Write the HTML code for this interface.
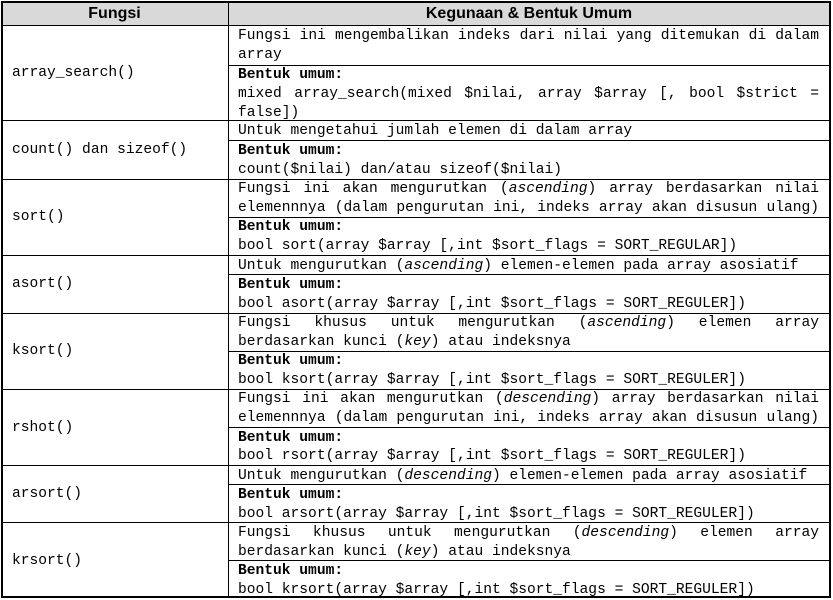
<!DOCTYPE html>
<html><head><meta charset="utf-8"><style>
body{margin:0;width:833px;height:599px;background:#fff;position:relative;overflow:hidden;font-family:"Liberation Mono",monospace;font-size:14.6px;color:#000}
.h{position:absolute;background:#000;height:1px}
.v{position:absolute;background:#000;width:1px}
.t{position:absolute;left:238px;width:581px;line-height:19px;white-space:nowrap;margin-top:1px}
.j{text-align:justify;text-align-last:justify;white-space:normal}
.l{position:absolute;left:12px;line-height:19px;margin-top:1px}
b{font-weight:bold}
.hd{position:absolute;top:1px;height:24px;background:#d9d9d9;font-family:"Liberation Sans",sans-serif;font-weight:bold;font-size:16px;line-height:26px;text-align:center}
</style></head><body>
<div class="hd" style="left:1px;width:227px">Fungsi</div>
<div class="hd" style="left:229px;width:600px">Kegunaan &amp; Bentuk Umum</div>
<div class="h" style="left:1px;top:1px;width:829px;height:2px"></div>
<div class="h" style="left:1px;top:596px;width:829px;height:2px"></div>
<div class="v" style="left:1px;top:1px;height:597px;width:2px"></div>
<div class="v" style="left:829px;top:1px;height:597px;width:2px"></div>
<div class="v" style="left:228px;top:1px;height:597px"></div>
<div class="h" style="left:1px;top:25px;width:829px"></div>
<div class="h" style="left:1px;top:120px;width:829px"></div>
<div class="h" style="left:1px;top:179px;width:829px"></div>
<div class="h" style="left:1px;top:255px;width:829px"></div>
<div class="h" style="left:1px;top:313px;width:829px"></div>
<div class="h" style="left:1px;top:389px;width:829px"></div>
<div class="h" style="left:1px;top:465px;width:829px"></div>
<div class="h" style="left:1px;top:522px;width:829px"></div>
<div class="h" style="left:228px;top:65px;width:602px"></div>
<div class="h" style="left:228px;top:140px;width:602px"></div>
<div class="h" style="left:228px;top:217px;width:602px"></div>
<div class="h" style="left:228px;top:274px;width:602px"></div>
<div class="h" style="left:228px;top:351px;width:602px"></div>
<div class="h" style="left:228px;top:427px;width:602px"></div>
<div class="h" style="left:228px;top:484px;width:602px"></div>
<div class="h" style="left:228px;top:560px;width:602px"></div>

<div class="l" style="top:63px">array_search()</div>
<div class="l" style="top:140px">count() dan sizeof()</div>
<div class="l" style="top:207px">sort()</div>
<div class="l" style="top:274px">asort()</div>
<div class="l" style="top:341px">ksort()</div>
<div class="l" style="top:418px">rshot()</div>
<div class="l" style="top:484px">arsort()</div>
<div class="l" style="top:551px">krsort()</div>

<div class="t j" style="top:26px">Fungsi ini mengembalikan indeks dari nilai yang ditemukan di dalam</div>
<div class="t" style="top:45px">array</div>
<div class="t" style="top:65px"><b>Bentuk umum:</b></div>
<div class="t j" style="top:84px">mixed array_search(mixed $nilai, array $array [, bool $strict =</div>
<div class="t" style="top:103px">false])</div>

<div class="t" style="top:121px">Untuk mengetahui jumlah elemen di dalam array</div>
<div class="t" style="top:141px"><b>Bentuk umum:</b></div>
<div class="t" style="top:160px">count($nilai) dan/atau sizeof($nilai)</div>

<div class="t j" style="top:179px">Fungsi ini akan mengurutkan (<i>ascending</i>) array berdasarkan nilai</div>
<div class="t j" style="top:198px">elemennnya (dalam pengurutan ini, indeks array akan disusun ulang)</div>
<div class="t" style="top:217px"><b>Bentuk umum:</b></div>
<div class="t" style="top:236px">bool sort(array $array [,int $sort_flags = SORT_REGULAR])</div>

<div class="t" style="top:256px">Untuk mengurutkan (<i>ascending</i>) elemen-elemen pada array asosiatif</div>
<div class="t" style="top:275px"><b>Bentuk umum:</b></div>
<div class="t" style="top:294px">bool asort(array $array [,int $sort_flags = SORT_REGULER])</div>

<div class="t j" style="top:313px">Fungsi khusus untuk mengurutkan (<i>ascending</i>) elemen array</div>
<div class="t" style="top:332px">berdasarkan kunci (<i>key</i>) atau indeksnya</div>
<div class="t" style="top:351px"><b>Bentuk umum:</b></div>
<div class="t" style="top:370px">bool ksort(array $array [,int $sort_flags = SORT_REGULER])</div>

<div class="t j" style="top:389px">Fungsi ini akan mengurutkan (<i>descending</i>) array berdasarkan nilai</div>
<div class="t j" style="top:408px">elemennnya (dalam pengurutan ini, indeks array akan disusun ulang)</div>
<div class="t" style="top:428px"><b>Bentuk umum:</b></div>
<div class="t" style="top:446px">bool rsort(array $array [,int $sort_flags = SORT_REGULER])</div>

<div class="t" style="top:466px">Untuk mengurutkan (<i>descending</i>) elemen-elemen pada array asosiatif</div>
<div class="t" style="top:485px"><b>Bentuk umum:</b></div>
<div class="t" style="top:504px">bool arsort(array $array [,int $sort_flags = SORT_REGULER])</div>

<div class="t j" style="top:523px">Fungsi khusus untuk mengurutkan (<i>descending</i>) elemen array</div>
<div class="t" style="top:542px">berdasarkan kunci (<i>key</i>) atau indeksnya</div>
<div class="t" style="top:561px"><b>Bentuk umum:</b></div>
<div class="t" style="top:580px">bool krsort(array $array [,int $sort_flags = SORT_REGULER])</div>
</body></html>
